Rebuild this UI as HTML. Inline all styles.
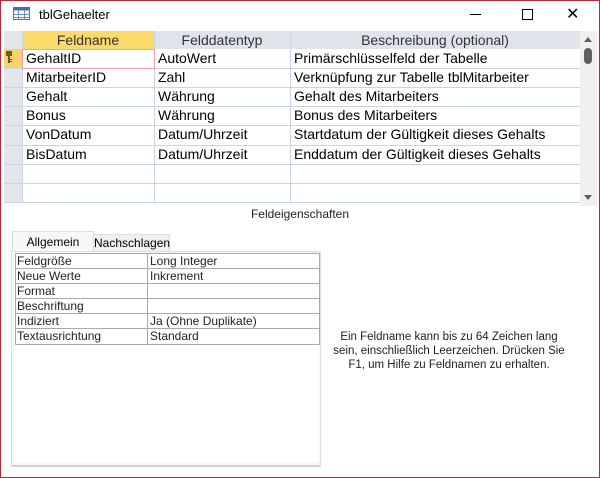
<!DOCTYPE html><html><head><style>
body{margin:0;width:600px;height:478px;overflow:hidden;background:#fff;font-family:"Liberation Sans",sans-serif;}
.win{position:absolute;left:0;top:0;width:598px;height:476px;border:1px solid #b02a3c;background:#fff;}
.a{position:absolute;}
.t{font-size:14px;color:#000;white-space:nowrap;}
.hl{position:absolute;height:1px;background:#c8d4e8;}
.vl{position:absolute;width:1px;background:#c8d4e8;}
.p{font-size:12px;color:#222;white-space:nowrap;line-height:15px;}
</style></head><body><div class="win"></div>
<svg class="a" style="left:13px;top:7px" width="17" height="13"><rect x="0.5" y="0.5" width="16" height="12" fill="#fff" stroke="#4a6da8"/><rect x="0.5" y="0.5" width="16" height="3" fill="#4a6da8"/><path d="M0 7.5H17M0 10.5H17M5.5 3V13M11.5 3V13" stroke="#6d8cc0"/></svg>
<div class="a t" style="left:39px;top:7px;font-size:13px">tblGehaelter</div>
<div class="a" style="left:470px;top:14px;width:11px;height:1px;background:#000"></div>
<div class="a" style="left:522px;top:9px;width:9px;height:9px;border:1px solid #000"></div>
<div class="a" style="left:566px;top:4px;font-size:16px;color:#000">✕</div>
<div class="a" style="left:4px;top:31px;width:576px;height:172px;background:#fff"></div>
<div class="a" style="left:4px;top:31px;width:18px;height:172px;background:#e3e5ea"></div>
<div class="a" style="left:4px;top:49px;width:18px;height:19px;background:#f7d36a"></div>
<div class="a" style="left:22px;top:31px;width:132px;height:18px;background:#fbd96a"></div>
<div class="a" style="left:154px;top:31px;width:426px;height:18px;background:#dfe3ea"></div>
<div class="a t" style="left:22px;top:32px;width:132px;text-align:center;color:#333">Feldname</div>
<div class="a t" style="left:154px;top:32px;width:136px;text-align:center;color:#333">Felddatentyp</div>
<div class="a t" style="left:290px;top:32px;width:290px;text-align:center;color:#333">Beschreibung (optional)</div>
<div class="hl" style="left:4px;top:68px;width:576px"></div>
<div class="hl" style="left:4px;top:87px;width:576px"></div>
<div class="hl" style="left:4px;top:106px;width:576px"></div>
<div class="hl" style="left:4px;top:125px;width:576px"></div>
<div class="hl" style="left:4px;top:145px;width:576px"></div>
<div class="hl" style="left:4px;top:164px;width:576px"></div>
<div class="hl" style="left:4px;top:183px;width:576px"></div>
<div class="hl" style="left:4px;top:202px;width:576px"></div>
<div class="vl" style="left:22px;top:31px;height:172px"></div>
<div class="vl" style="left:154px;top:31px;height:172px"></div>
<div class="vl" style="left:290px;top:31px;height:172px"></div>
<div class="a" style="left:22px;top:49px;width:131px;height:18px;border:1px solid #f0a0a8"></div>
<svg class="a" style="left:5px;top:51px" width="8" height="13"><rect x="1" y="0" width="6" height="5" fill="#6b5a2a"/><rect x="3" y="5" width="2" height="7" fill="#6b5a2a"/><rect x="5" y="8" width="2" height="1" fill="#6b5a2a"/><rect x="5" y="10" width="2" height="1" fill="#6b5a2a"/></svg>
<div class="a t" style="left:26px;top:50px">GehaltID</div><div class="a t" style="left:158px;top:50px">AutoWert</div><div class="a t" style="left:294px;top:50px">Primärschlüsselfeld der Tabelle</div>
<div class="a t" style="left:26px;top:69px">MitarbeiterID</div><div class="a t" style="left:158px;top:69px">Zahl</div><div class="a t" style="left:294px;top:69px">Verknüpfung zur Tabelle tblMitarbeiter</div>
<div class="a t" style="left:26px;top:88px">Gehalt</div><div class="a t" style="left:158px;top:88px">Währung</div><div class="a t" style="left:294px;top:88px">Gehalt des Mitarbeiters</div>
<div class="a t" style="left:26px;top:107px">Bonus</div><div class="a t" style="left:158px;top:107px">Währung</div><div class="a t" style="left:294px;top:107px">Bonus des Mitarbeiters</div>
<div class="a t" style="left:26px;top:126px">VonDatum</div><div class="a t" style="left:158px;top:126px">Datum/Uhrzeit</div><div class="a t" style="left:294px;top:126px">Startdatum der Gültigkeit dieses Gehalts</div>
<div class="a t" style="left:26px;top:146px">BisDatum</div><div class="a t" style="left:158px;top:146px">Datum/Uhrzeit</div><div class="a t" style="left:294px;top:146px">Enddatum der Gültigkeit dieses Gehalts</div>
<div class="a" style="left:580px;top:31px;width:17px;height:175px;background:#f0f0f0"></div>
<div class="a" style="left:584px;top:37px;width:0;height:0;border-left:4px solid transparent;border-right:4px solid transparent;border-bottom:5px solid #606060"></div>
<div class="a" style="left:584px;top:48px;width:8px;height:16px;border-radius:4px;background:#606060"></div>
<div class="a" style="left:584px;top:195px;width:0;height:0;border-left:4px solid transparent;border-right:4px solid transparent;border-top:5px solid #606060"></div>
<div class="a" style="left:0;top:207px;width:600px;text-align:center;font-size:12px;color:#222">Feldeigenschaften</div>
<div class="a p" style="left:12px;top:231px;width:80px;height:21px;background:#f7f7f7;border:1px solid #ddd;border-bottom:none;text-align:center;line-height:20px;color:#000">Allgemein</div>
<div class="a p" style="left:93px;top:234px;width:75px;height:17px;background:#f0f0f0;border:1px solid #ddd;text-align:center;line-height:17px;color:#000">Nachschlagen</div>
<div class="a" style="left:11px;top:251px;width:308px;height:213px;background:#f7f7f7;border:1px solid #ddd;border-bottom:2px solid #d0d0d0"></div>
<div class="a" style="left:14px;top:253px;width:305px;height:209px;background:#fff"></div>
<div class="a" style="left:15px;top:253px;width:303px;height:90px;border:1px solid #aaa"></div>
<div class="a" style="left:147px;top:253px;width:1px;height:91px;background:#aaa"></div>
<div class="a" style="left:15px;top:268px;width:304px;height:1px;background:#aaa"></div>
<div class="a" style="left:15px;top:283px;width:304px;height:1px;background:#aaa"></div>
<div class="a" style="left:15px;top:298px;width:304px;height:1px;background:#aaa"></div>
<div class="a" style="left:15px;top:313px;width:304px;height:1px;background:#aaa"></div>
<div class="a" style="left:15px;top:328px;width:304px;height:1px;background:#aaa"></div>
<div class="a p" style="left:17px;top:254px">Feldgröße</div><div class="a p" style="left:150px;top:254px">Long Integer</div>
<div class="a p" style="left:17px;top:269px">Neue Werte</div><div class="a p" style="left:150px;top:269px">Inkrement</div>
<div class="a p" style="left:17px;top:284px">Format</div>
<div class="a p" style="left:17px;top:299px">Beschriftung</div>
<div class="a p" style="left:17px;top:314px">Indiziert</div><div class="a p" style="left:150px;top:314px">Ja (Ohne Duplikate)</div>
<div class="a p" style="left:17px;top:329px">Textausrichtung</div><div class="a p" style="left:150px;top:329px">Standard</div>
<div class="a" style="left:329px;top:330px;width:240px;text-align:center;font-size:11.5px;line-height:14px;color:#222">Ein Feldname kann bis zu 64 Zeichen lang<br>sein, einschließlich Leerzeichen. Drücken Sie<br>F1, um Hilfe zu Feldnamen zu erhalten.</div>
</body></html>
